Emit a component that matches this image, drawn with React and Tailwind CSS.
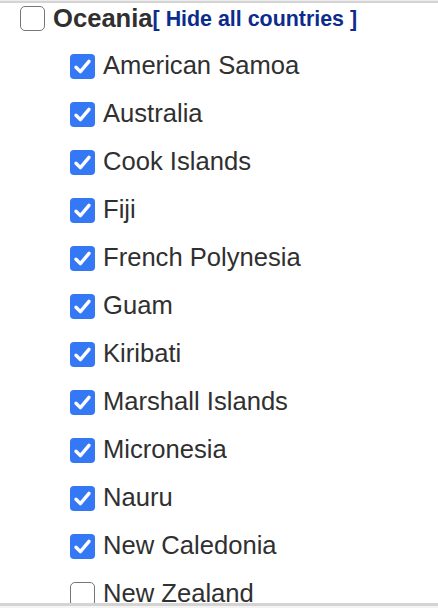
import React from "react";

const countries = [
  { name: "American Samoa", checked: true },
  { name: "Australia", checked: true },
  { name: "Cook Islands", checked: true },
  { name: "Fiji", checked: true },
  { name: "French Polynesia", checked: true },
  { name: "Guam", checked: true },
  { name: "Kiribati", checked: true },
  { name: "Marshall Islands", checked: true },
  { name: "Micronesia", checked: true },
  { name: "Nauru", checked: true },
  { name: "New Caledonia", checked: true },
  { name: "New Zealand", checked: false },
];

function Box({ checked }) {
  if (checked) {
    return (
      <span className="flex h-[25px] w-[25px] shrink-0 items-center justify-center rounded-[4px] bg-[#3478f6]">
        <svg viewBox="0 0 25 25" className="h-[25px] w-[25px]">
          <path
            d="M6 13.2 L10.4 17.6 L19 7.4"
            fill="none"
            stroke="white"
            strokeWidth="3.4"
            strokeLinecap="round"
            strokeLinejoin="round"
          />
        </svg>
      </span>
    );
  }
  return (
    <span className="block h-[25px] w-[25px] shrink-0 rounded-[5px] border-[1.5px] border-[#767676] bg-white" />
  );
}

export default function App() {
  return (
    <div
      className="flex h-[608px] w-[438px] flex-col overflow-hidden bg-white text-[#303030]"
      style={{ fontFamily: '"Liberation Sans", Arial, Helvetica, sans-serif' }}
    >
      <div className="h-[1px] bg-[#ececec]" />
      <div className="h-[2px] bg-[#d4d4d4]" />
      <div className="min-h-0 flex-1 overflow-hidden">
        <div className="flex h-[31px] items-center pl-[20px]">
          <Box checked={false} />
          <span className="ml-[8px] text-[25.6px] font-bold leading-none">Oceania</span>
          <span className="mt-[2px] text-[21.4px] font-bold leading-none text-[#0b2c8c]">
            [ Hide all countries ]
          </span>
        </div>
        <ul className="mt-[8px] pl-[70px]">
          {countries.map((c) => (
            <li key={c.name} className="flex h-[48px] items-center">
              <Box checked={c.checked} />
              <span className="ml-[8px] text-[25.6px] leading-none">{c.name}</span>
            </li>
          ))}
        </ul>
      </div>
      <div className="h-[3px] bg-[#d4d4d4]" />
      <div className="h-[2px] bg-[#f4f4f4]" />
    </div>
  );
}
